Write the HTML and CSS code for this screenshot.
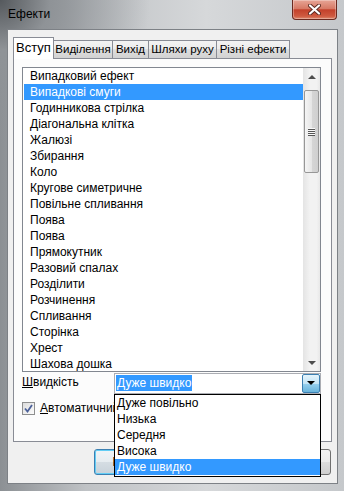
FILE: index.html
```html
<!DOCTYPE html>
<html lang="uk">
<head>
    <meta charset="UTF-8">
    <title>Ефекти</title>
    <link rel="stylesheet" href="styles.css">
</head>
<body>

<div class="window">
    <div class="titlebar">
        <span class="title">Ефекти</span>
        <button class="close-btn">
            <svg width="13" height="11" viewBox="0 0 13 11">
                <path d="M2 1.5 L11 9.5 M11 1.5 L2 9.5" stroke="#5b2a22" stroke-width="4" stroke-linecap="round"/>
                <path d="M2 1.5 L11 9.5 M11 1.5 L2 9.5" stroke="#fff" stroke-width="2.2" stroke-linecap="round"/>
            </svg>
        </button>
    </div>

    <div class="client">
        <div class="tabs">
            <div class="tab active tab-intro">Вступ</div>
            <div class="tab tab-emph">Виділення</div>
            <div class="tab tab-exit">Вихід</div>
            <div class="tab tab-path">Шляхи руху</div>
            <div class="tab tab-misc">Різні ефекти</div>
        </div>

        <div class="panel">
            <div class="listbox">
                <ul class="items">
                    <li>Випадковий ефект</li>
                    <li class="selected">Випадкові смуги</li>
                    <li>Годинникова стрілка</li>
                    <li>Діагональна клітка</li>
                    <li>Жалюзі</li>
                    <li>Збирання</li>
                    <li>Коло</li>
                    <li>Кругове симетричне</li>
                    <li>Повільне спливання</li>
                    <li>Поява</li>
                    <li>Поява</li>
                    <li>Прямокутник</li>
                    <li>Разовий спалах</li>
                    <li>Розділити</li>
                    <li>Розчинення</li>
                    <li>Спливання</li>
                    <li>Сторінка</li>
                    <li>Хрест</li>
                    <li>Шахова дошка</li>
                </ul>
                <div class="scrollbar">
                    <div class="sb-arrow"><span class="tri-up"></span></div>
                    <div class="sb-track">
                        <div class="sb-thumb"><span class="grip"></span></div>
                    </div>
                    <div class="sb-arrow"><span class="tri-down"></span></div>
                </div>
            </div>

            <div class="speed-row">
                <span class="label"><u>Ш</u>видкість</span>
                <div class="combo">
                    <span class="combo-value">Дуже швидко</span>
                    <span class="combo-btn"><span class="tri-black"></span></span>
                </div>
            </div>

            <div class="check-row">
                <span class="checkbox">
                    <svg width="9" height="9" viewBox="0 0 9 9">
                        <path d="M1 4.5 L3.5 7.5 L8 1" fill="none" stroke="#4c6199" stroke-width="1.8"/>
                    </svg>
                </span>
                <span><u>А</u>втоматичний попередній перегляд</span>
            </div>
        </div>

        <div class="buttons">
            <button class="btn default">Гаразд</button>
            <button class="btn">Скасувати</button>
            <button class="btn">Довідка</button>
        </div>
    </div>

    <!-- список комбобоксу, відкритий поверх діалогу -->
    <ul class="popup">
        <li>Дуже повільно</li>
        <li>Низька</li>
        <li>Середня</li>
        <li>Висока</li>
        <li class="selected">Дуже швидко</li>
    </ul>
</div>

</body>
</html>
```

FILE: styles.css
```css
* {
    box-sizing: border-box;
}
body {
    margin: 0;
    font-family: "Liberation Sans", Arial, sans-serif;
    font-size: 12px;
    color: #000;
}
.window {
    position: relative;
    width: 344px;
    height: 491px;
    display: flex;
    flex-direction: column;
    padding: 0 6px 7px 7px;
    overflow: hidden;
    background:
        radial-gradient(circle at 0 0, #55595d 0, #8f9397 50px, rgba(160, 164, 168, 0) 150px),
        linear-gradient(to right, #8c9094 0, #bfc2c5 25%, #d6d8da 60%, #c5c8cb 100%);
}
.titlebar {
    height: 29px;
    display: flex;
    align-items: center;
    padding: 0 0 2px 1px;
}
.close-btn {
    position: absolute;
    top: 0;
    left: 292px;
    width: 45px;
    height: 20px;
    padding: 0;
    border: 1px solid #6b2a20;
    border-top: none;
    border-radius: 0 0 4px 4px;
    background: linear-gradient(#e7a596, #d77a66 45%, #c3412b 52%, #cf5a40 85%, #dd8a6f);
    box-shadow: inset 0 0 0 1px rgba(255, 255, 255, 0.3);
    display: flex;
    align-items: center;
    justify-content: center;
}
.client {
    height: 455px;
    border: 1px solid #7d8186;
    background: #f0f0f0;
    display: flex;
    flex-direction: column;
    padding: 7px 5px 0 5px;
}
.tabs {
    display: flex;
    align-items: flex-end;
    height: 21px;
    position: relative;
    z-index: 1;
}
.tab {
    height: 18px;
    line-height: 16px;
    margin-left: -1px;
    border: 1px solid #898c95;
    border-bottom: none;
    text-align: center;
    white-space: nowrap;
    font-size: 11.5px;
    background: linear-gradient(#f3f3f3, #ebebeb 50%, #dedede 50%, #d2d2d2);
}
.tab.active {
    height: 22px;
    line-height: 19px;
    margin-left: 0;
    margin-bottom: -1px;
    font-size: 13px;
    background: #fff;
    position: relative;
    z-index: 2;
}
.tab-intro { width: 41px; }
.tab-emph { width: 60px; }
.tab-exit { width: 37px; }
.tab-path { width: 69px; }
.tab-misc { width: 74px; }
.panel {
    height: 384px;
    border: 1px solid #898c95;
    background: #fcfcfc;
    padding: 8px 10px 0 8px;
}
.listbox {
    display: flex;
    height: 305px;
    border: 1px solid #828790;
    background: #fff;
}
.items {
    flex: 1;
    list-style: none;
    margin: 0;
    padding: 0;
    overflow: hidden;
}
.items li {
    height: 16px;
    line-height: 16px;
    margin-left: 1px;
    padding-left: 6px;
    white-space: nowrap;
}
.items li.selected {
    background-color: #3399ff;
    color: #fff;
}
.scrollbar {
    width: 17px;
    display: flex;
    flex-direction: column;
    background: linear-gradient(to right, #e4e4e4, #f2f2f2 40%, #f2f2f2 80%, #e8e8e8);
}
.sb-arrow {
    height: 17px;
    display: flex;
    align-items: center;
    justify-content: center;
}
.tri-up {
    border-left: 4px solid transparent;
    border-right: 4px solid transparent;
    border-bottom: 4px solid #4d4d4d;
}
.tri-down {
    border-left: 4px solid transparent;
    border-right: 4px solid transparent;
    border-top: 4px solid #4d4d4d;
}
.sb-track {
    flex: 1;
}
.sb-thumb {
    margin: 5px 0 0 1px;
    width: 15px;
    height: 83px;
    border: 1px solid #979797;
    border-radius: 2px;
    background: linear-gradient(to right, #f5f5f5, #e6e6e6 50%, #d6d6d6 50%, #cfcfcf);
    display: flex;
    align-items: center;
    justify-content: center;
}
.grip {
    width: 7px;
    height: 8px;
    background: repeating-linear-gradient(#f8f8f8 0, #f8f8f8 1px, #555 1px, #555 2px);
}
.speed-row {
    display: flex;
    align-items: center;
    margin-top: 1px;
}
.label {
    width: 92px;
    margin-top: -3px;
}
.combo {
    width: 207px;
    height: 21px;
    border: 1px solid #abadb3;
    background: #fff;
    display: flex;
    align-items: center;
    justify-content: space-between;
    padding: 0 0 1px 1px;
}
.combo-value {
    background-color: #3399ff;
    color: #fff;
    line-height: 16px;
    padding: 0 1px;
}
.combo-btn {
    width: 18px;
    height: 19px;
    border: 1px solid #3c7fb1;
    border-radius: 2px;
    background: linear-gradient(#e5f4fc, #c4e5f6 50%, #98d1ef 50%, #68b3db);
    display: flex;
    align-items: center;
    justify-content: center;
}
.tri-black {
    border-left: 4px solid transparent;
    border-right: 4px solid transparent;
    border-top: 4px solid #000;
}
.check-row {
    display: flex;
    align-items: center;
    gap: 5px;
    margin-top: 7px;
}
.checkbox {
    width: 13px;
    height: 13px;
    border: 1px solid #8e8f8f;
    background: linear-gradient(135deg, #dcdcdc, #fcfcfc);
    display: flex;
    align-items: center;
    justify-content: center;
}
.buttons {
    display: flex;
    justify-content: flex-end;
    gap: 6px;
    margin: 7px 1px 0 0;
}
.btn {
    width: 75px;
    height: 26px;
    border: 1px solid #707070;
    border-radius: 3px;
    background: linear-gradient(#f2f2f2, #ebebeb 50%, #dddddd 50%, #cfcfcf);
    font-family: inherit;
    font-size: 12px;
    color: #000;
    padding: 0;
}
.btn.default {
    border-color: #3c7fb1;
    box-shadow: inset 0 0 0 1px #62cdf5;
    background: linear-gradient(#f0f4f7, #e6ecf0 50%, #d5dde3 50%, #c8d2da);
}
.popup {
    position: absolute;
    left: 114px;
    top: 394px;
    width: 207px;
    height: 83px;
    margin: 0;
    padding: 0;
    list-style: none;
    border: 1px solid #000;
    background: #fff;
    z-index: 5;
}
.popup li {
    height: 16px;
    line-height: 16px;
    padding-left: 2px;
    white-space: nowrap;
}
.popup li.selected {
    background-color: #3399ff;
    color: #fff;
}
```
